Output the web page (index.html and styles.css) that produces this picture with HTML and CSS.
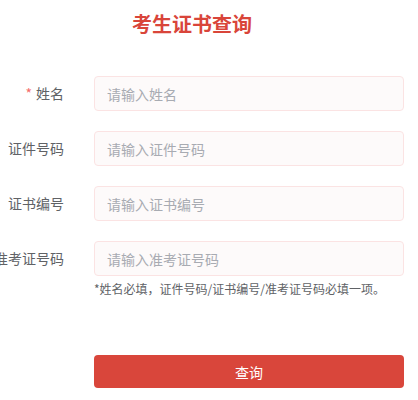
FILE: index.html
```html
<!DOCTYPE html>
<html lang="zh-CN">
<head>
<meta charset="utf-8">
<link rel="stylesheet" href="styles.css">
</head>
<body>
<div class="page">
  <h1 class="title">考生证书查询</h1>
  <form class="form">
    <div class="row">
      <label class="label"><span class="req">*</span>姓名</label>
      <input class="input" placeholder="请输入姓名">
    </div>
    <div class="row">
      <label class="label">证件号码</label>
      <input class="input" placeholder="请输入证件号码">
    </div>
    <div class="row">
      <label class="label">证书编号</label>
      <input class="input" placeholder="请输入证书编号">
    </div>
    <div class="row last">
      <label class="label">准考证号码</label>
      <div class="field">
        <input class="input" placeholder="请输入准考证号码">
        <p class="hint">*姓名必填，证件号码/证书编号/准考证号码必填一项。</p>
      </div>
    </div>
    <div class="row btn-row">
      <span class="label"></span>
      <button type="button" class="btn">查询</button>
    </div>
  </form>
</div>
</body>
</html>
```

FILE: styles.css
```css
* { box-sizing: border-box; }
html, body { margin: 0; padding: 0; background: #fff; }
body {
  font-family: "Noto Sans CJK SC", "Noto Sans", sans-serif;
  color: #606266;
  overflow: hidden;
}
.page { width: 418px; }
.title {
  width: 384px;
  margin: 12px 0 0;
  text-align: center;
  font-size: 20px;
  line-height: 24px;
  font-weight: 700;
  color: #d9453a;
}
.form { margin-top: 40px; }
.row {
  display: flex;
  align-items: flex-start;
  margin-bottom: 20px;
}
.label {
  flex: 0 0 64px;
  width: 64px;
  margin-right: 30px;
  text-align: right;
  font-size: 14px;
  line-height: 35px;
  white-space: nowrap;
  direction: rtl;
  overflow: visible;
}
.label { direction: ltr; display: flex; justify-content: flex-end; }
.req { color: #f56c6c; margin-right: 4px; font-size: 14px; }
.field { width: 310px; }
.input {
  display: block;
  width: 310px;
  height: 35px;
  padding: 0 12px;
  border: 1px solid #fbe3e3;
  border-radius: 4px;
  background: #fdfafa;
  font-family: inherit;
  font-size: 14px;
  color: #606266;
  outline: none;
}
.input::placeholder { color: #a8abb2; }
.hint {
  margin: 3px 0 0;
  font-size: 12px;
  line-height: 20px;
  color: #606266;
  white-space: nowrap;
}
.row.last { margin-bottom: 56px; }
.btn {
  width: 310px;
  height: 33px;
  border: none;
  border-radius: 4px;
  background: #d9463b;
  color: #fff;
  font-family: inherit;
  font-size: 14px;
}
```
